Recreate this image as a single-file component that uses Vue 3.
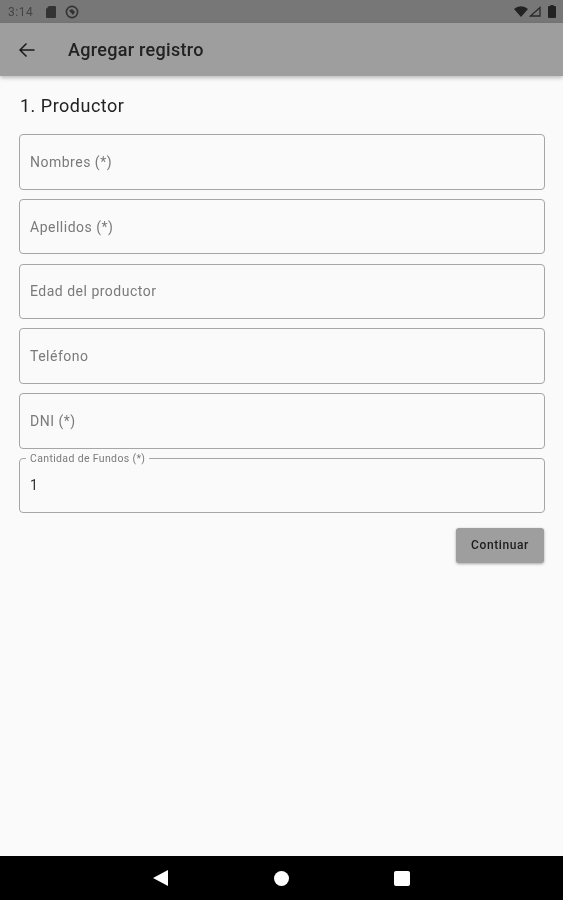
<script setup>
const fields = [
  { label: 'Nombres (*)' },
  { label: 'Apellidos (*)' },
  { label: 'Edad del productor' },
  { label: 'Teléfono' },
  { label: 'DNI (*)' },
]
</script>

<template>
  <div class="screen">
    <div class="status-bar">
      <span class="time">3:14</span>
      <svg class="status-icon" width="10" height="12" viewBox="0 0 10 12">
        <path d="M3 0h6a1 1 0 0 1 1 1v10a1 1 0 0 1-1 1H1a1 1 0 0 1-1-1V3z" fill="#333" />
      </svg>
      <svg class="status-icon" width="14" height="14" viewBox="0 0 14 14">
        <circle cx="7" cy="7" r="5.6" fill="none" stroke="#333" stroke-width="1.6" />
        <path d="M4 5.5 7 4 10 7 8 10z" fill="#333" />
      </svg>
      <span class="spacer"></span>
      <svg width="14" height="11" viewBox="0 0 14 11">
        <path d="M0 3a10.5 10.5 0 0 1 14 0L7 11z" fill="#222" />
      </svg>
      <svg class="signal" width="12" height="11" viewBox="0 0 12 11">
        <path d="M11 1.5V10H1.5z" fill="none" stroke="#2a2a2a" stroke-width="1.3" />
      </svg>
      <svg class="battery" width="8" height="13" viewBox="0 0 8 13">
        <path d="M2.5 0h3v1H7a1 1 0 0 1 1 1v10a1 1 0 0 1-1 1H1a1 1 0 0 1-1-1V2a1 1 0 0 1 1-1h1.5z" fill="#222" />
      </svg>
    </div>

    <header class="app-bar">
      <svg class="back" width="22" height="22" viewBox="0 0 22 22">
        <path d="M18.5 11H4M10.5 4.5 4 11l6.5 6.5" fill="none" stroke="#1a1a1a" stroke-width="1.5" />
      </svg>
      <h1>Agregar registro</h1>
    </header>

    <main class="content">
      <h2>1. Productor</h2>
      <div class="form">
        <div v-for="field in fields" :key="field.label" class="field">
          <span class="placeholder">{{ field.label }}</span>
        </div>
        <div class="field filled">
          <span class="floating">Cantidad de Fundos (*)</span>
          <span class="value">1</span>
        </div>
      </div>
      <div class="actions">
        <button class="continue">Continuar</button>
      </div>
    </main>

    <nav class="nav-bar">
      <svg width="15" height="16" viewBox="0 0 15 16"><path d="M15 0v16L0 8z" fill="#fff" /></svg>
      <span class="home"></span>
      <span class="recent"></span>
    </nav>
  </div>
</template>

<style>
body {
  margin: 0;
}
</style>

<style scoped>
.screen {
  width: 563px;
  height: 900px;
  display: flex;
  flex-direction: column;
  background: #fafafa;
  font-family: Roboto, "Liberation Sans", sans-serif;
  overflow: hidden;
  filter: blur(0.6px);
}

.status-bar {
  height: 23px;
  flex: none;
  display: flex;
  align-items: center;
  padding: 0 7px 0 8px;
  background: #777;
  color: #444;
}

.time {
  font-size: 12px;
  letter-spacing: 0.5px;
  margin-right: 13px;
}

.status-icon {
  margin-right: 9px;
}

.spacer {
  flex: 1;
}

.signal {
  margin: 0 7px 0 1px;
}

.app-bar {
  height: 53px;
  flex: none;
  display: flex;
  align-items: center;
  padding-left: 16px;
  background: #9e9e9e;
  box-shadow: 0 2px 4px rgba(0, 0, 0, 0.25);
  position: relative;
}

.back {
  margin-right: 30px;
}

.app-bar h1 {
  margin: 0;
  font-size: 18px;
  font-weight: 500;
  letter-spacing: 0.3px;
  color: #222;
}

.content {
  flex: 1;
  padding: 19px 18px 0 19px;
}

.content h2 {
  margin: 0 0 18px 1px;
  font-size: 18px;
  line-height: 21px;
  font-weight: 400;
  letter-spacing: 0.5px;
  color: #222;
}

.form {
  display: flex;
  flex-direction: column;
  gap: 9.3px;
}

.field {
  height: 55.5px;
  box-sizing: border-box;
  display: flex;
  align-items: center;
  padding: 0 10px;
  border: 1px solid #a6a6a6;
  border-radius: 4px;
  position: relative;
}

.placeholder {
  font-size: 14px;
  letter-spacing: 0.5px;
  color: #7a7a7a;
}

.floating {
  position: absolute;
  left: 6px;
  top: -7px;
  padding: 0 4px;
  background: #fafafa;
  font-size: 10.5px;
  line-height: 13px;
  letter-spacing: 0.35px;
  color: #7a7a7a;
}

.value {
  padding-bottom: 2px;
  font-size: 14px;
  color: #333;
}

.actions {
  display: flex;
  justify-content: flex-end;
  margin-top: 14.5px;
  padding-right: 1px;
}

.continue {
  width: 88px;
  height: 35px;
  border: none;
  border-radius: 3px;
  background: #9e9e9e;
  box-shadow: 0 1px 3px rgba(0, 0, 0, 0.35);
  font-family: inherit;
  font-size: 12px;
  font-weight: 500;
  letter-spacing: 0.6px;
  color: #1c1c1c;
}

.nav-bar {
  height: 44px;
  flex: none;
  display: flex;
  align-items: center;
  background: #000;
  padding-left: 153px;
}

.home {
  width: 15px;
  height: 15px;
  margin-left: 106px;
  border-radius: 50%;
  background: #fff;
}

.recent {
  width: 16px;
  height: 15px;
  margin-left: 105px;
  border-radius: 2px;
  background: #fff;
}
</style>
